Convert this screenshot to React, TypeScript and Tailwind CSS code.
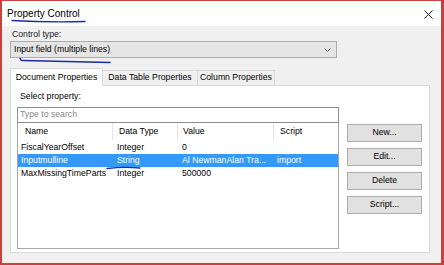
import React from "react";

const rows = [
  { name: "FiscalYearOffset", type: "Integer", value: "0", script: "", sel: false },
  { name: "Inputmulline", type: "String", value: "Al NewmanAlan Tra...", script: "import", sel: true },
  { name: "MaxMissingTimeParts", type: "Integer", value: "500000", script: "", sel: false },
];

function Btn({ label }: { label: string }) {
  return (
    <div className="h-[18px] w-[75px] bg-[#e1e1e1] border border-[#adadad] flex items-center justify-center text-black">
      {label}
    </div>
  );
}

export default function App() {
  return (
    <div className="relative w-[444px] h-[265px] overflow-hidden border-l-2 border-r-[3px] border-t border-b-2 border-[#c9413f] bg-[#f0f0f0] flex flex-col font-['Liberation_Sans',Arial,sans-serif] text-[8.7px] text-[#1a1a1a]">
      {/* Title bar */}
      <div className="h-[25px] shrink-0 bg-white flex items-center justify-between pl-[5px] pr-[8px]">
        <span className="text-[10px] text-black">Property Control</span>
        <svg width="9" height="9" viewBox="0 0 9 9" className="mt-[1px]">
          <path d="M0.5 0.5 L8.5 8.5 M8.5 0.5 L0.5 8.5" stroke="#222" strokeWidth="1" />
        </svg>
      </div>

      {/* Body */}
      <div className="flex flex-col pl-[8px] pt-[1px]">
        <div className="h-[14px] leading-[14px] pl-[2px]">Control type:</div>
        <div className="h-[17px] w-[327px] bg-[#e5e5e5] border border-[#acacac] flex items-center justify-between pl-[3px] pr-[5px]">
          <span className="text-black">Input field (multiple lines)</span>
          <svg width="7" height="4" viewBox="0 0 7 4">
            <path d="M0.5 0.5 L3.5 3.5 L6.5 0.5" stroke="#6a6a6a" fill="none" strokeWidth="1" />
          </svg>
        </div>

        {/* Tabs */}
        <div className="mt-[10px] h-[17px] flex items-end">
          <div className="relative z-10 h-[18px] w-[93px] -mb-px bg-white border border-b-0 border-[#d9d9d9] flex items-center justify-center text-black">
            Document Properties
          </div>
          <div className="h-[15px] w-[95px] bg-[#f0f0f0] border border-l-0 border-b-0 border-[#d9d9d9] flex items-center justify-center text-black">
            Data Table Properties
          </div>
          <div className="h-[15px] w-[77px] bg-[#f0f0f0] border border-l-0 border-b-0 border-[#d9d9d9] flex items-center justify-center text-black">
            Column Properties
          </div>
        </div>

        {/* Panel */}
        <div className="h-[168px] w-[420px] bg-white border border-[#d9d9d9] flex pl-[6px]">
          <div className="flex flex-col w-[322px]">
            <div className="h-[21px] flex items-center pl-[3px] text-black">Select property:</div>
            <div className="h-[16px] border border-[#8f8f8f] flex items-center pl-[2px] text-[#8a8a8a]">
              Type to search
            </div>
            <div className="h-[126px] border-x border-b border-[#a8a8a8] flex flex-col">
              <div className="h-[17px] flex text-black">
                <div className="w-[95px] border-r border-[#e5e5e5] flex items-center pl-[7px]">Name</div>
                <div className="w-[65px] border-r border-[#e5e5e5] flex items-center pl-[6px]">Data Type</div>
                <div className="w-[96px] border-r border-[#e5e5e5] flex items-center pl-[5px]">Value</div>
                <div className="flex-1 flex items-center pl-[6px]">Script</div>
              </div>
              <div className="pt-[1px] flex flex-col">
                {rows.map((r) => (
                  <div
                    key={r.name}
                    className={
                      r.sel
                        ? "h-[13px] flex items-center bg-[#3399ff] text-white"
                        : "h-[13px] flex items-center text-black"
                    }
                  >
                    <div className="w-[95px] pl-[3px] whitespace-nowrap overflow-hidden">{r.name}</div>
                    <div className="w-[65px] pl-[4px] whitespace-nowrap overflow-hidden">{r.type}</div>
                    <div className="w-[96px] pl-[4px] whitespace-nowrap overflow-hidden">{r.value}</div>
                    <div className="flex-1 pl-[3px] whitespace-nowrap overflow-hidden">{r.script}</div>
                  </div>
                ))}
              </div>
            </div>
          </div>
          <div className="ml-[8px] mt-[38px] flex flex-col gap-[6px]">
            <Btn label="New..." />
            <Btn label="Edit..." />
            <Btn label="Delete" />
            <Btn label="Script..." />
          </div>
        </div>
      </div>

      {/* Hand-drawn annotations */}
      <svg className="absolute left-0 top-0 pointer-events-none" width="444" height="265" viewBox="0 0 444 265">
        <path d="M10 19.5 Q 45 21.5 83 20.5" stroke="#1b2aa8" strokeWidth="1.4" fill="none" strokeLinecap="round" />
        <path d="M18 57.5 Q 19 60 21 59.5 Q 65 60.5 108 61.5" stroke="#1b2aa8" strokeWidth="1.4" fill="none" strokeLinecap="round" />
        <path d="M105 167.5 Q 122 165.5 138 167" stroke="#1b2aa8" strokeWidth="1.3" fill="none" strokeLinecap="round" />
      </svg>
    </div>
  );
}
